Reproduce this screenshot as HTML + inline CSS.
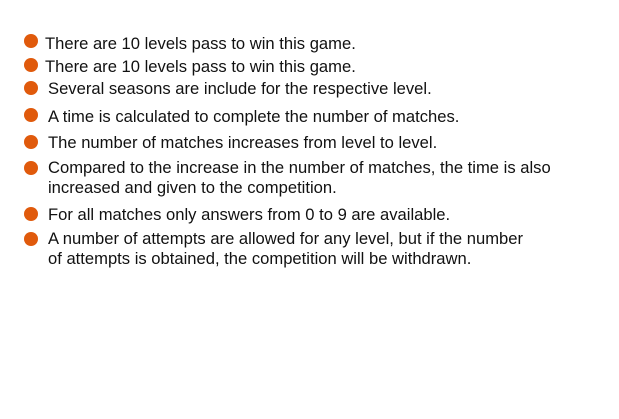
<!DOCTYPE html>
<html><head><meta charset="utf-8"><style>
body{margin:0;width:619px;height:419px;background:#fff;position:relative;font-family:"Liberation Sans",sans-serif;font-size:16.6px;color:#111;overflow:hidden}
.b{position:absolute;left:24px;width:14px;height:14px;border-radius:50%;background:#e05a0c}
.t{position:absolute;line-height:20px;white-space:nowrap}
</style></head><body>
<div class="b" style="top:34px"></div><div class="t" style="left:45px;top:34px">There are 10 levels pass to win this game.</div>
<div class="b" style="top:58px"></div><div class="t" style="left:45px;top:57px">There are 10 levels pass to win this game.</div>
<div class="b" style="top:81px"></div><div class="t" style="left:48px;top:79px">Several seasons are include for the respective level.</div>
<div class="b" style="top:108px"></div><div class="t" style="left:48px;top:107px">A time is calculated to complete the number of matches.</div>
<div class="b" style="top:135px"></div><div class="t" style="left:48px;top:133px">The number of matches increases from level to level.</div>
<div class="b" style="top:161px"></div><div class="t" style="left:48px;top:158px">Compared to the increase in the number of matches, the time is also<br>increased and given to the competition.</div>
<div class="b" style="top:207px"></div><div class="t" style="left:48px;top:205px">For all matches only answers from 0 to 9 are available.</div>
<div class="b" style="top:232px"></div><div class="t" style="left:48px;top:229px">A number of attempts are allowed for any level, but if the number<br>of attempts is obtained, the competition will be withdrawn.</div>
</body></html>
